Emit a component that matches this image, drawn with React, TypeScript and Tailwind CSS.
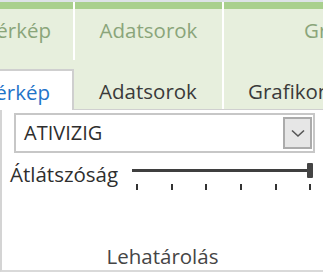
import React from "react";

const font = { fontFamily: '"Open Sans", "Noto Sans", sans-serif' };

export default function App() {
  const ticks = [0, 1, 2, 3, 4, 5];
  return (
    <div
      className="w-[323px] h-[276px] overflow-hidden bg-white border-t-2 border-[#dde3e8] flex flex-col"
      style={font}
    >
      {/* contextual tab group headers */}
      <div className="h-[58px] flex bg-white shrink-0">
        <div className="w-[73px] flex flex-col bg-[#e7efdd] overflow-hidden">
          <div className="h-[7px] bg-[#a9d08e]" />
          <div className="mt-[9px] h-[24px] leading-[24px] text-[20.5px] text-[#8aa57a] whitespace-nowrap flex justify-end pr-[22px]">
            Térkép
          </div>
        </div>
        <div className="w-[2px]" />
        <div className="w-[147px] flex flex-col bg-[#e7efdd]">
          <div className="h-[7px] bg-[#a9d08e]" />
          <div className="mt-[9px] h-[24px] leading-[24px] text-[20.5px] text-[#8aa57a] whitespace-nowrap flex justify-center">
            Adatsorok
          </div>
        </div>
        <div className="w-[2px]" />
        <div className="flex-1 flex flex-col bg-[#e7efdd] overflow-hidden">
          <div className="h-[7px] bg-[#a9d08e]" />
          <div className="mt-[9px] h-[24px] leading-[24px] text-[20.5px] text-[#8aa57a] whitespace-nowrap pl-[80px]">
            Grafikon
          </div>
        </div>
      </div>

      {/* tabs */}
      <div className="h-[50px] flex bg-[#e7efdd] shrink-0">
        <div className="w-[74px] mt-[9px] bg-white border-t-2 border-r-2 border-[#cfcfcf] overflow-hidden flex items-center justify-end pr-[22px] pt-[3px]">
          <span className="text-[20.5px] leading-[24px] text-[#1f74c9] whitespace-nowrap">Térkép</span>
        </div>
        <div className="w-[148px] border-b border-[#d0d0d0] flex items-end justify-center pb-[6px]">
          <span className="text-[20.5px] leading-[24px] text-[#3a3a3a] whitespace-nowrap">Adatsorok</span>
        </div>
        <div className="w-[2px] bg-white border-b border-[#d0d0d0]" />
        <div className="flex-1 border-b border-[#d0d0d0] flex items-end pl-[24px] pb-[6px] overflow-hidden">
          <span className="text-[20.5px] leading-[24px] text-[#3a3a3a] whitespace-nowrap">Grafikon</span>
        </div>
      </div>

      {/* panel */}
      <div className="h-[162px] shrink-0 bg-white border-l-2 border-b-2 border-l-[#d4d4d4] border-b-[#d9d9d9] flex flex-col">
        <div className="ml-[12px] mt-[3px] w-[301px] h-[40px] border-2 border-[#c7c7c7] flex items-center justify-between">
          <span className="pl-[8px] text-[20px] leading-[28px] text-[#2e2e2e]">ATIVIZIG</span>
          <div className="mr-[1px] w-[29px] h-[32px] bg-[#e6e6e6] border-2 border-[#ababab] flex items-center justify-center">
            <svg width="14" height="9" viewBox="0 0 14 9">
              <path d="M1 1.5 L7 7 L13 1.5" fill="none" stroke="#555555" strokeWidth="1.6" />
            </svg>
          </div>
        </div>

        <div className="mt-[7px] flex items-start">
          <span className="ml-[8px] text-[20.5px] leading-[28px] text-[#2e2e2e] whitespace-nowrap">Átlátszóság</span>
          <div className="ml-[14px] mt-[3px] w-[183px] h-[28px] relative">
            <div className="absolute left-0 top-[6px] w-[176px] h-[3px] bg-[#3f3f3f]" />
            <div className="absolute left-[175px] top-0 w-[6px] h-[15px] bg-[#444444] rounded-[1px]" />
            <div className="absolute left-[4px] top-[21px] w-[175px] flex justify-between">
              {ticks.map((t) => (
                <div key={t} className="w-[2px] h-[6px] bg-[#333333]" />
              ))}
            </div>
          </div>
        </div>

        <div className="flex-1" />
        <div className="text-center text-[20.5px] leading-[28px] text-[#454545]">Lehatárolás</div>
      </div>
    </div>
  );
}
